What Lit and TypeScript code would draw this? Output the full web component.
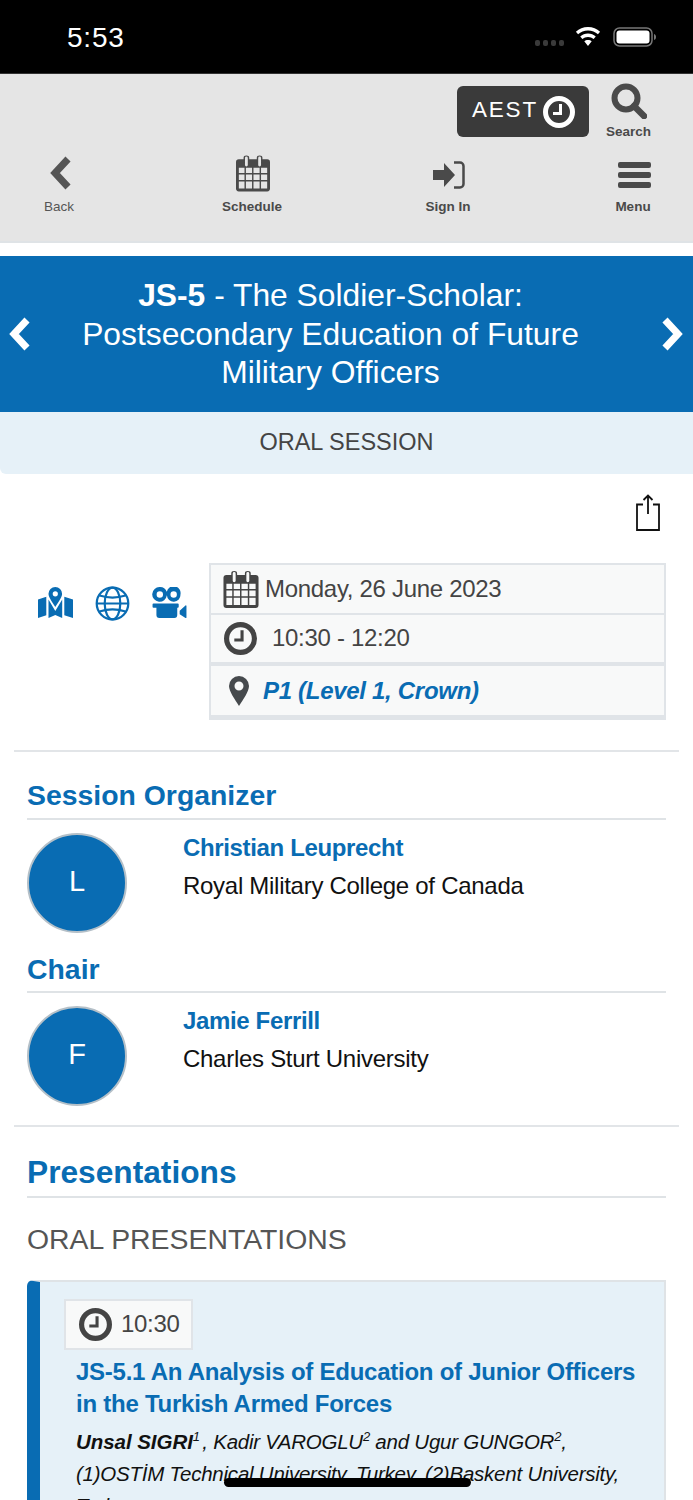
import { LitElement, html, css, svg } from "lit";
import { customElement } from "lit/decorators.js";

const calendar = svg`<svg class="ic cal" viewBox="0 0 36 38"><path fill="currentColor" fill-rule="evenodd" d="M3 4h5V2.500a3 2.500 0 0 1 6 0V4h8V2.500a3 2.500 0 0 1 6 0V4h5a3 3 0 0 1 3 3v28a3 3 0 0 1-3 3H3a3 3 0 0 1-3-3V7a3 3 0 0 1 3-3zM9.500 2.500V10a1.500 1.500 0 0 0 3 0V2.500a1.500 1.500 0 0 0-3 0zM23.500 2.500V10a1.500 1.500 0 0 0 3 0V2.500a1.500 1.500 0 0 0-3 0zM3 13v5.500h6V13zM10.500 13v5.500h6.500V13zM18.500 13v5.500h6.500V13zM26.500 13v5.500H33V13zM3 20v6h6v-6zM10.500 20v6h6.500v-6zM18.500 20v6h6.500v-6zM26.500 20v6H33v-6zM3 27.500V35h6v-7.500zM10.500 27.500V35h6.500v-7.500zM18.500 27.500V35h6.500v-7.500zM26.500 27.500V35H33v-7.500z"/></svg>`;
const clock = svg`<svg class="ic" viewBox="0 0 32 32"><circle cx="16" cy="16" r="13.500" fill="none" stroke="currentColor" stroke-width="5"/><path d="M17.500 8v9.500H10" fill="none" stroke="currentColor" stroke-width="3"/></svg>`;
const pin = svg`<svg class="ic" viewBox="0 0 20 30"><path fill="currentColor" fill-rule="evenodd" d="M10 0a10 10 0 0 1 10 10c0 5-6 14-10 20C6 24 0 15 0 10A10 10 0 0 1 10 0zm0 5.500a4.500 4.500 0 1 0 0 9 4.500 4.500 0 0 0 0-9z"/></svg>`;
const chevL = svg`<svg class="ic chev" viewBox="0 0 24 34"><path d="M19 3 6 17 19 31" fill="none" stroke="currentColor" stroke-width="7" stroke-linejoin="miter"/></svg>`;
const chevR = svg`<svg class="ic chev" viewBox="0 0 24 34"><path d="M5 3 18 17 5 31" fill="none" stroke="currentColor" stroke-width="7"/></svg>`;

@customElement("app-root")
export class AppRoot extends LitElement {
  static styles = css`
    :host { display: block; position: relative; width: 693px; height: 1500px; overflow: hidden; background: #fff; font-family: "Liberation Sans", Arial, sans-serif; color: #444; }
    * { box-sizing: border-box; }
    .ic { display: block; }
    .chev { width: 24px; height: 34px; flex: none; }
    .cal { width: 34px; height: 37px; flex: none; }
    .status { height: 74px; background: #000; color: #fff; display: flex; align-items: center; justify-content: space-between; padding: 2px 36px 0 67px; border-bottom: 1px solid #333; }
    .time { font-size: 28px; line-height: 1; letter-spacing: 0.8px; margin-top: 1px; }
    .sys { display: flex; align-items: center; height: 30px; margin-top: -1px; }
    .dots { display: flex; gap: 3px; margin: 11px 11px 0 0; }
    .dots i { width: 5px; height: 6px; border-radius: 2px; background: #3a3a3a; }
    .wifi { width: 26px; height: 19px; margin-right: 12px; margin-top: -1px; }
    .batt { width: 44px; height: 20px; }
    .head { height: 169px; background: #e5e5e5; border-bottom: 2px solid #dfe3e6; display: flex; flex-direction: column; }
    .toprow { display: flex; justify-content: flex-end; height: 67px; padding: 9px 42px 0 0; }
    .aest { width: 132px; height: 51px; margin-top: 3px; background: #3a3a3a; border-radius: 6px; color: #fff; display: flex; align-items: center; padding-left: 15px; gap: 5px; font-size: 22.500px; letter-spacing: 1.800px; font-weight: normal; }
    .aest span { padding-bottom: 3px; }
    .aest .ic { width: 32px; height: 32px; }
    .search { margin-left: 17px; display: flex; flex-direction: column; align-items: center; width: 45px; color: #4a4a4a; font-size: 13.500px; font-weight: bold; }
    .search .ic { width: 36px; height: 36px; margin-bottom: 5px; }
    .nav { display: flex; padding-left: 29px; }
    .nav a { display: flex; flex: none; width: 60px; flex-direction: column; align-items: center; justify-content: flex-end; height: 73px; font-size: 13.500px; font-weight: bold; color: #4a4a4a; white-space: nowrap; }
    .nav a.back { font-weight: normal; color: #555; }
    .nav a.m1 { margin-left: 133px; }
    .nav a.m2 { margin-left: 136px; }
    .nav a.m3 { margin-left: 125px; }
    .nav .glyph { height: 38px; margin-bottom: 5px; padding-left: 2px; display: flex; align-items: center; justify-content: center; }
    .nav .glyph.up { margin-bottom: 7px; }
    .nav .back .glyph { padding-left: 3px; }
    .nav .m3 .glyph { padding-left: 3px; }
    .banner { margin-top: 13px; height: 156px; padding: 0 9px 0 8px; background: #096cb3; color: #fff; display: flex; align-items: center; position: relative; }
    .banner .chev:last-child { margin-left: auto; }
    .banner h1 { margin: 0 0 0 38px; font-size: 31.800px; line-height: 38.500px; font-weight: normal; text-align: center; width: 521px; }
    .sub { height: 62px; background: #e6f1f8; border-radius: 0 0 0 6px; text-align: center; font-size: 23.500px; line-height: 61px; color: #444; }
    .share { display: flex; justify-content: flex-end; padding: 20px 32px 0 0; height: 89px; }
    .share svg { width: 26px; height: 38px; }
    .info { display: flex; padding-left: 38px; height: 157px; }
    .links { display: flex; align-items: flex-start; width: 171px; gap: 22px; padding-top: 23px; color: #096cb3; }
    .links .ic { width: 35px; height: 35px; }
    .links .ic.short { height: 31px; margin-top: 1px; }
    .table { width: 457px; border: 2px solid #e0e4e8; border-bottom-width: 5px; background: #f8f9f9; font-size: 24px; letter-spacing: -0.300px; color: #444; }
    .row { display: flex; align-items: center; }
    .r1 { height: 50px; border-bottom: 2px solid #e0e4e8; padding-left: 12px; gap: 6px; }
    .r1 .ic { width: 36px; height: 37px; }
    .r2 { height: 51px; border-bottom: 4px solid #e0e4e8; padding-left: 13px; gap: 15px; }
    .r2 .ic { width: 33px; height: 33px; }
    .r2 span { margin-top: -2px; }
    .r3 { height: 49px; padding-left: 18px; gap: 14px; color: #096cb3; font-weight: bold; font-style: italic; }
    .r3 .ic { width: 20px; height: 30px; color: #464a4d; }
    hr { border: 0; height: 2px; background: #e2e5e8; margin: 0 14px; }
    .hr1 { margin-top: 30px; }
    .sec { padding: 0 27px; }
    h2 { margin: 0; color: #096cb3; font-size: 28.400px; line-height: 34px; font-weight: bold; border-bottom: 2px solid #dfe3e6; padding-bottom: 5px; }
    .o { padding-top: 26px; }
    .o h2 { padding-bottom: 6px; }
    .person { display: flex; height: 100px; margin-top: 13px; }
    .av { width: 100px; height: 100px; border-radius: 50%; background: #096cb3; border: 2px solid #b5c0c8; color: #fff; font-size: 29px; display: flex; align-items: center; justify-content: center; padding-bottom: 4px; flex: none; }
    .who { margin-left: 56px; font-size: 24px; letter-spacing: -0.280px; color: #111; }
    .who b { display: block; color: #096cb3; line-height: 30px; letter-spacing: -0.350px; margin-bottom: 8px; }
    .who span { line-height: 30px; display: block; }
    .c { padding-top: 19px; }
    .hr2 { margin-top: 19px; }
    .p { padding-top: 27px; }
    .p h2.big { font-size: 31.700px; line-height: 36px; padding-bottom: 6px; }
    .kind { font-size: 28.400px; color: #555; line-height: 34px; margin-top: 24px; }
    .card { margin-top: 24px; background: #e6f1f8; border: 2px solid #dfe3e6; border-left: 13px solid #096cb3; border-radius: 6px 0 0 0; padding: 17px 14px 0 24px; height: 260px; }
    .chip { width: 129px; height: 51px; background: #f8f9f9; border: 2px solid #e0e4e8; display: flex; align-items: center; padding-left: 13px; gap: 9px; font-size: 24px; letter-spacing: -0.300px; color: #444; }
    .chip .ic { width: 33px; height: 33px; }
    .chip span { margin-top: -2px; }
    .t { margin: 6px 0 0 12px; color: #096cb3; font-size: 24px; letter-spacing: -0.250px; font-weight: bold; line-height: 32px; }
    .a { margin: 6px 0 0 12px; color: #111; font-size: 20.500px; letter-spacing: -0.230px; line-height: 32px; font-style: italic; }
    .a b { letter-spacing: -0.050px; }
    .a sup { font-size: 13px; line-height: 0; }
    .sep { margin-left: -3px; }
    .home { position: absolute; left: 224px; top: 1478px; width: 247px; height: 9px; border-radius: 5px; background: #000; }
  `;

  render() {
    return html`
      <div class="status">
        <div class="time">5:53</div>
        <div class="sys">
          <div class="dots"><i></i><i></i><i></i><i></i></div>
          <svg class="wifi" viewBox="0 0 28 22"><path fill="#fff" d="M14 0c5.500 0 10.300 2 14 5.500l-2.500 3C22.500 5.500 18.500 4 14 4S5.500 5.500 2.500 8.500L0 5.500C3.700 2 8.500 0 14 0zm0 7.500c3.500 0 6.500 1.200 9 3.500l-2.500 3c-1.800-1.600-4-2.500-6.500-2.500S9.300 12.400 7.500 14L5 11c2.500-2.300 5.500-3.500 9-3.500zm0 7.500c1.700 0 3.200.6 4.300 1.600L14 22l-4.300-5.400C10.800 15.600 12.300 15 14 15z"/></svg>
          <svg class="batt" viewBox="0 0 44 20"><rect x="1" y="1" width="38" height="18" rx="5.500" fill="none" stroke="#777" stroke-width="1.500"/><rect x="3.500" y="3.500" width="33" height="13" rx="3" fill="#fff"/><path d="M41 7c1.500.5 2 1.500 2 3s-.5 2.500-2 3z" fill="#777"/></svg>
        </div>
      </div>
      <div class="head">
        <div class="toprow">
          <div class="aest"><span>AEST</span> ${clock}</div>
          <div class="search">
            <svg class="ic" viewBox="0 0 36 36"><circle cx="15" cy="15" r="11.500" fill="none" stroke="currentColor" stroke-width="6"/><path d="m23 23 10 10" stroke="currentColor" stroke-width="6.500" stroke-linecap="round"/></svg>
            Search
          </div>
        </div>
        <div class="nav">
          <a class="back"><span class="glyph up">${chevL}</span>Back</a>
          <a class="m1"><span class="glyph up">${calendar}</span>Schedule</a>
          <a class="m2"><span class="glyph"><svg class="ic" width="32" height="28" viewBox="0 0 32 28"><path fill="currentColor" d="M0 9h11V2l11 12-11 12v-7H0z"/><path d="M21 1.500h6a3.500 3.500 0 0 1 3.500 3.500v18a3.500 3.500 0 0 1-3.500 3.500h-6" fill="none" stroke="currentColor" stroke-width="2.500"/></svg></span>Sign In</a>
          <a class="m3"><span class="glyph"><svg class="ic" width="33" height="26" viewBox="0 0 33 26"><path fill="currentColor" d="M2 0h29a2 2 0 0 1 2 2v2a2 2 0 0 1-2 2H2a2 2 0 0 1-2-2V2a2 2 0 0 1 2-2zm0 10h29a2 2 0 0 1 2 2v2a2 2 0 0 1-2 2H2a2 2 0 0 1-2-2v-2a2 2 0 0 1 2-2zm0 10h29a2 2 0 0 1 2 2v2a2 2 0 0 1-2 2H2a2 2 0 0 1-2-2v-2a2 2 0 0 1 2-2z"/></svg></span>Menu</a>
        </div>
      </div>
      <div class="banner">
        ${chevL}
        <h1><b>JS-5</b> - The Soldier-Scholar: Postsecondary Education of Future Military Officers</h1>
        ${chevR}
      </div>
      <div class="sub">ORAL SESSION</div>
      <div class="share">
        <svg viewBox="0 0 26 38"><path d="M8 10.500H2v25.500h22V10.500h-6M13 20V1.500M8.500 6 13 1.500 17.500 6" fill="none" stroke="#111" stroke-width="1.800"/></svg>
      </div>
      <div class="info">
        <div class="links">
          <svg class="ic short" viewBox="0 0 35 31"><path fill="currentColor" fill-rule="evenodd" d="M17.300 0a6.800 6.800 0 0 1 6.800 6.800c0 3.500-4 9-6.800 13.200-2.800-4.200-6.800-9.700-6.800-13.200A6.800 6.800 0 0 1 17.300 0zm0 4.200a2.600 2.600 0 1 0 0 5.200 2.600 2.600 0 0 0 0-5.200zM0 12.500 8.300 9.800V28.300L0 31zM10.500 12.500l6.800 11.500 6.900-11.500V31l-6.900-3-6.800 3zM26.300 9.800 35 12.500V31l-8.700-2.700z"/></svg>
          <svg class="ic" viewBox="0 0 35 35" fill="none" stroke="currentColor" stroke-width="2.200"><circle cx="17.500" cy="17.500" r="15.800"/><ellipse cx="17.500" cy="17.500" rx="7.800" ry="15.800"/><path d="M4.500 9.500c8 2.500 18 2.500 26 0M4.500 25.500c8-2.500 18-2.500 26 0M1.700 17.500h31.600"/></svg>
          <svg class="ic short" viewBox="0 0 35 32"><path fill="currentColor" fill-rule="evenodd" d="M7.500 0a7.600 7.600 0 0 1 7.200 4.800A7 7 0 0 1 28.800 7.800a7 7 0 0 1-14 .8A7.600 7.600 0 1 1 7.500 0zm0 4.400a3.300 3.300 0 1 0 0 6.600 3.300 3.300 0 0 0 0-6.600zm14.300 0a3.300 3.300 0 1 0 0 6.600 3.300 3.300 0 0 0 0-6.600zM1 17h25a1 1 0 0 1 1 1v2.500a1 1 0 0 1-1 1h-.500V29a3 3 0 0 1-3 3H7a3 3 0 0 1-3-3v-7.500H1a1 1 0 0 1-1-1V18a1 1 0 0 1 1-1zm27 7.500 6-5.500a.7.700 0 0 1 1 .5v12a.7.700 0 0 1-1 .5l-6-4z"/></svg>
        </div>
        <div class="table">
          <div class="row r1">${calendar}<span>Monday, 26 June 2023</span></div>
          <div class="row r2">${clock}<span>10:30 - 12:20</span></div>
          <div class="row r3">${pin}<span>P1 (Level 1, Crown)</span></div>
        </div>
      </div>
      <hr class="hr1" />
      <div class="sec o">
        <h2>Session Organizer</h2>
        <div class="person"><div class="av">L</div><div class="who"><b>Christian Leuprecht</b><span>Royal Military College of Canada</span></div></div>
      </div>
      <div class="sec c">
        <h2>Chair</h2>
        <div class="person"><div class="av">F</div><div class="who"><b>Jamie Ferrill</b><span>Charles Sturt University</span></div></div>
      </div>
      <hr class="hr2" />
      <div class="sec p">
        <h2 class="big">Presentations</h2>
        <div class="kind">ORAL PRESENTATIONS</div>
        <div class="card">
          <div class="chip">${clock}<span>10:30</span></div>
          <div class="t">JS-5.1 An Analysis of Education of Junior Officers in the Turkish Armed Forces</div>
          <div class="a"><b>Unsal SIGRI</b><sup>1</sup> <span class="sep">,</span> Kadir VAROGLU<sup>2</sup> and Ugur GUNGOR<sup>2</sup>, (1)OSTİM Technical University, Turkey, (2)Baskent University, Turkey</div>
        </div>
      </div>
      <div class="home"></div>
    `;
  }
}
